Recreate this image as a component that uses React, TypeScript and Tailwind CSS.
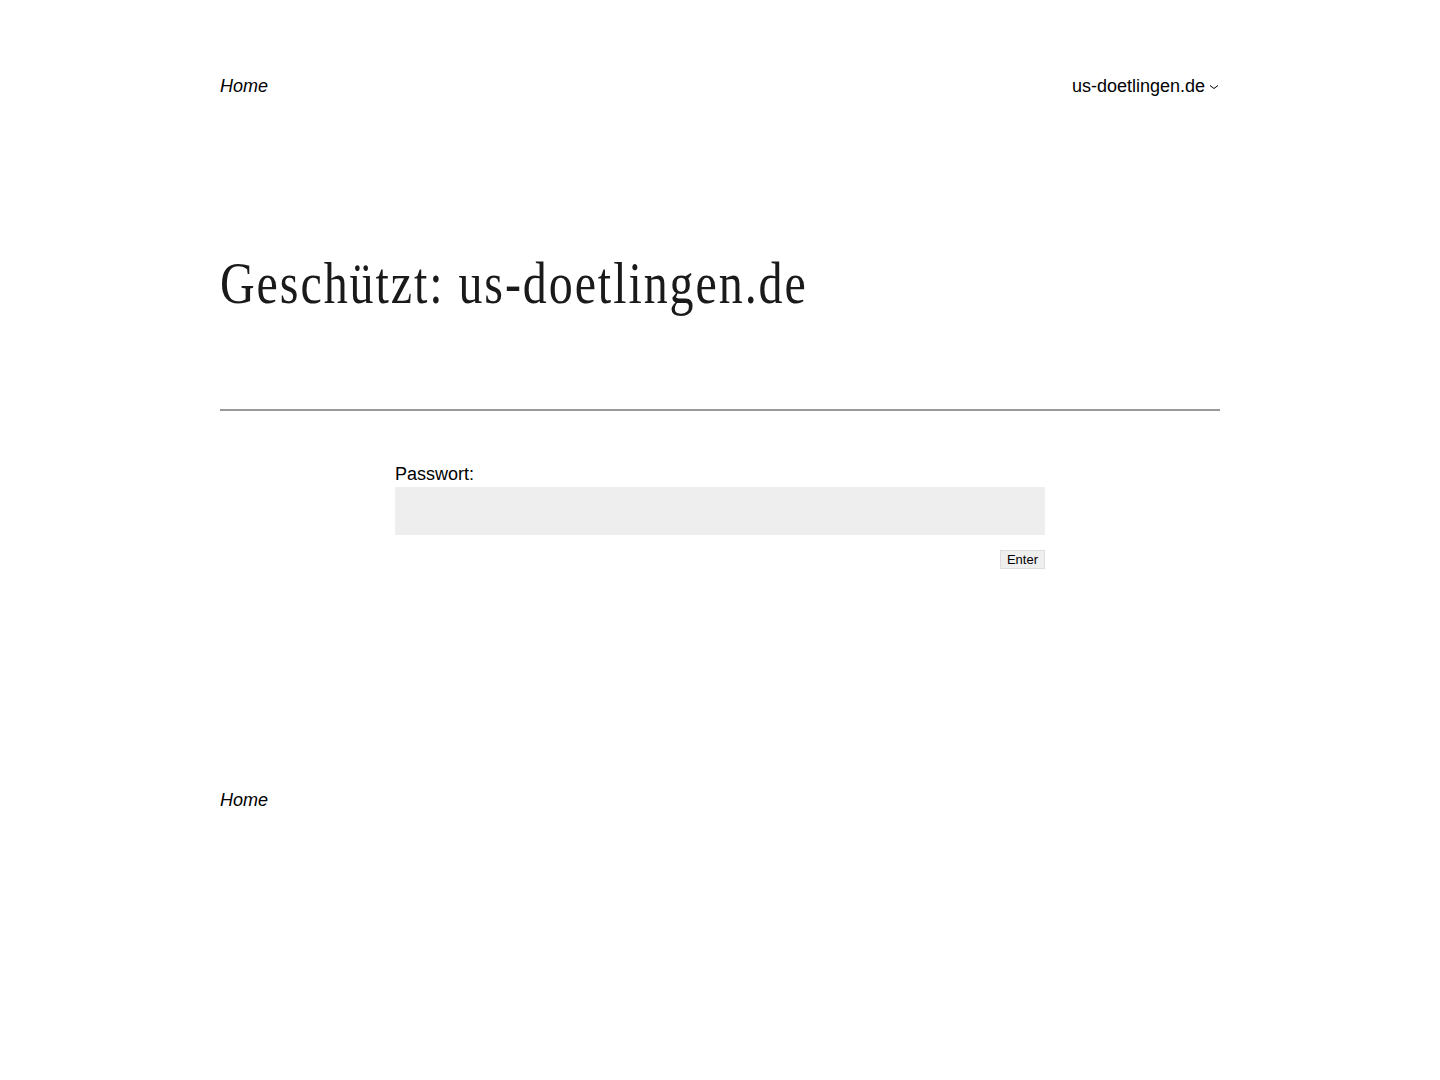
import React from 'react';

const sans = { fontFamily: '"Liberation Sans", Arial, sans-serif' };

function Chevron() {
  return (
    <svg width="12" height="12" viewBox="0 0 24 24" className="ml-[3px] mt-[2px]" fill="none" stroke="currentColor" strokeWidth="2">
      <path d="M4 9l8 6 8-6" />
    </svg>
  );
}

export default function App() {
  return (
    <div className="min-h-[1080px] bg-white text-black" style={sans}>
      <div className="mx-auto w-[1000px]">
        <header className="flex items-center justify-between pt-[74px] text-[18px] leading-[24px]">
          <a className="italic">Home</a>
          <a className="flex items-center">
            us-doetlingen.de
            <Chevron />
          </a>
        </header>

        <main className="pt-[145px]">
          <h1
            className="text-[60px] leading-[80px] font-normal"
            style={{ fontFamily: '"Liberation Serif", "Times New Roman", serif' }}
          >
            <span className="inline-block origin-left scale-x-[0.8] tracking-[2.4px] whitespace-nowrap text-[#1a1a1a]">
              Geschützt: us-doetlingen.de
            </span>
          </h1>

          <hr className="mt-[86px] border-0 h-[2px] bg-[#999999]" />

          <form className="mx-auto w-[650px] pt-[52px]">
            <label className="block text-[18px] leading-[22px]">Passwort:</label>
            <input type="password" className="mt-[2px] block h-[48px] w-full bg-[#eeeeee] outline-none" />
            <div className="flex justify-end pt-[15px]">
              <button type="button" className="h-[19px] px-[6px] text-[13px] leading-[17px] bg-[#efefef] border border-[#dddddd]">
                Enter
              </button>
            </div>
          </form>
        </main>

        <footer className="pt-[219px] text-[18px] leading-[24px]">
          <a className="italic">Home</a>
        </footer>
      </div>
    </div>
  );
}
